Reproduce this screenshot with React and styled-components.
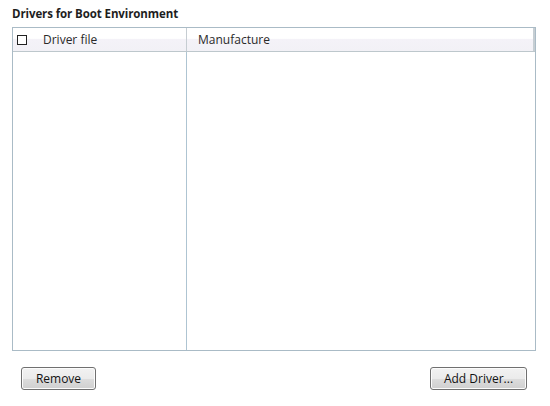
import styled, { createGlobalStyle } from "styled-components";

const Global = createGlobalStyle`
  html, body {
    margin: 0;
    padding: 0;
    background: #ffffff;
  }
  body {
    font-family: "Open Sans", "Noto Sans", sans-serif;
    color: #1e1e1e;
  }
`;

const Page = styled.div`
  width: 550px;
  height: 406px;
  box-sizing: border-box;
  padding: 6px 14px 0 12px;
  display: flex;
  flex-direction: column;
`;

const Title = styled.div`
  font-size: 11.5px;
  font-weight: 700;
  line-height: 16px;
  height: 21px;
  letter-spacing: -0.1px;
`;

const Table = styled.div`
  height: 324px;
  box-sizing: border-box;
  border: 1px solid #aabbc6;
  display: flex;
  flex-direction: column;
`;

const Header = styled.div`
  display: grid;
  grid-template-columns: 174px 1fr;
  height: 24px;
  box-sizing: border-box;
  background: linear-gradient(#ffffff 0%, #ffffff 45%, #f4f2f8 50%, #f2f1f6 100%);
  border-bottom: 1px solid #bdc7cc;
  position: relative;
  &::after {
    content: "";
    position: absolute;
    right: 0;
    top: 0;
    bottom: 0;
    width: 2px;
    background: #c6ced3;
  }
`;

const HeadCell = styled.div`
  display: flex;
  align-items: center;
  gap: ${(p) => (p.$check ? "16px" : "0")};
  padding-left: ${(p) => p.$pad};
  font-size: 12px;
  color: #2a2a2a;
  border-right: ${(p) => (p.$sep ? "1px solid #c6cdd2" : "none")};
`;

const Check = styled.span`
  width: 8px;
  height: 8px;
  border: 1px solid #222;
  background: #fff;
  display: inline-block;
`;

const Body = styled.div`
  flex: 1;
  display: grid;
  grid-template-columns: 174px 1fr;
`;

const Column = styled.div`
  border-right: ${(p) => (p.$sep ? "1px solid #aec4d2" : "none")};
`;

const Footer = styled.div`
  display: flex;
  justify-content: space-between;
  padding: 16px 9px 0 9px;
`;

const Button = styled.button`
  height: 23px;
  width: ${(p) => p.$w};
  box-sizing: border-box;
  border: 1px solid #707070;
  border-radius: 3px;
  background: linear-gradient(#f2f2f2 0%, #ebebeb 50%, #dddddd 51%, #cfcfcf 100%);
  box-shadow: inset 0 0 0 1px #fcfcfc;
  font-family: "Open Sans", "Noto Sans", sans-serif;
  font-size: 12px;
  color: #111;
  padding: 0;
  cursor: pointer;
`;

export default function App() {
  return (
    <>
      <Global />
      <Page>
        <Title>Drivers for Boot Environment</Title>
        <Table>
          <Header>
            <HeadCell $check $sep $pad="4px">
              <Check />
              Driver file
            </HeadCell>
            <HeadCell $pad="11px">Manufacture</HeadCell>
          </Header>
          <Body>
            <Column $sep />
            <Column />
          </Body>
        </Table>
        <Footer>
          <Button $w="75px">Remove</Button>
          <Button $w="97px">Add Driver...</Button>
        </Footer>
      </Page>
    </>
  );
}
